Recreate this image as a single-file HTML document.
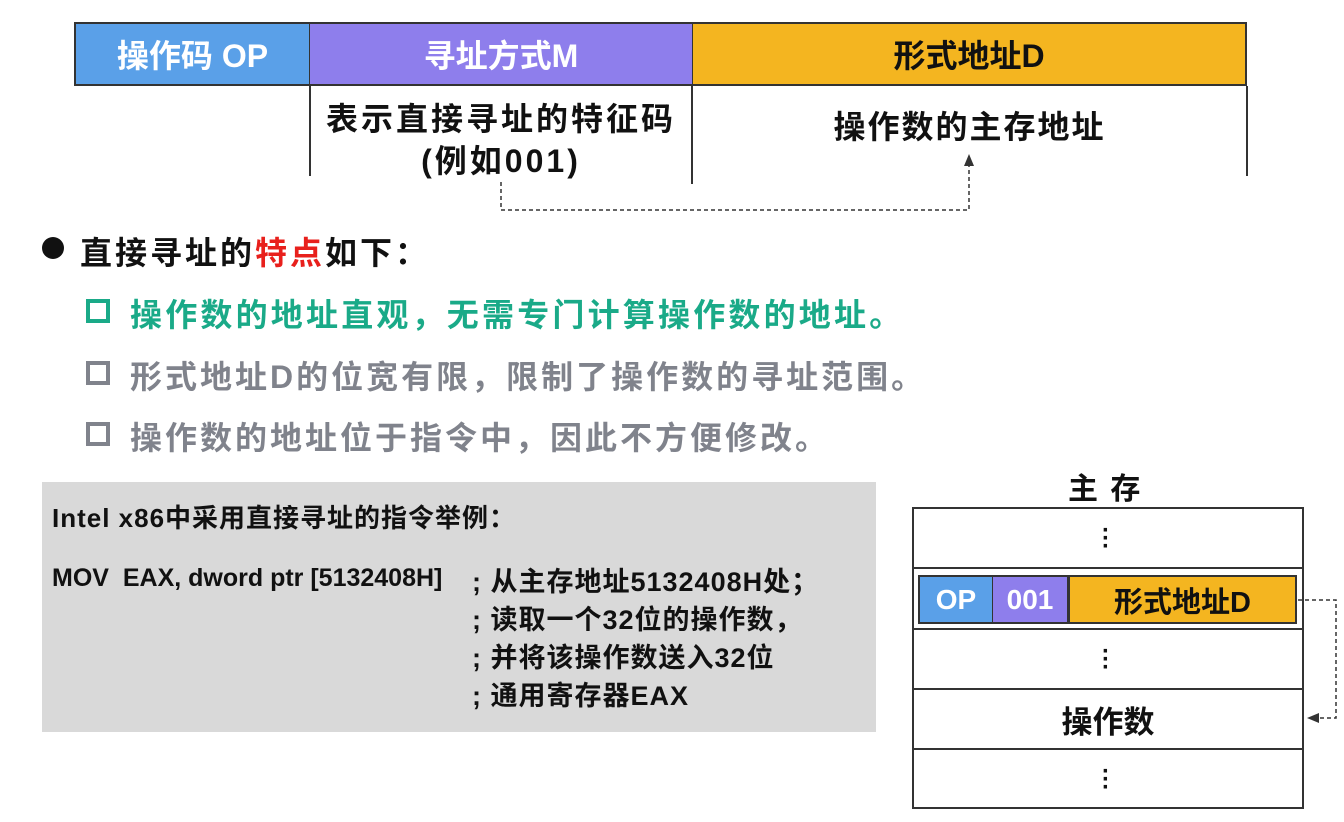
<!DOCTYPE html>
<html><head><meta charset="utf-8"><style>
body{margin:0;width:1344px;height:822px;background:#fff;position:relative;overflow:hidden;font-family:"Liberation Sans","Noto Sans CJK SC",sans-serif;font-weight:bold;}
.a{position:absolute;white-space:nowrap;}
.c{display:flex;align-items:center;justify-content:center;}
</style></head><body>
<div class="a c" style="left:74px;top:22px;width:236px;height:64px;background:#5aa0e8;color:#fff;font-size:32px;box-sizing:border-box;border:2px solid #333;border-right:1px solid #333;">操作码 OP</div>
<div class="a c" style="left:310px;top:22px;width:382px;height:64px;background:#8e7eec;color:#fff;font-size:32px;box-sizing:border-box;border-top:2px solid #333;border-bottom:2px solid #333;">寻址方式M</div>
<div class="a c" style="left:692px;top:22px;width:555px;height:64px;background:#f4b520;color:#111;font-size:32px;box-sizing:border-box;border:2px solid #333;border-left:1px solid #333;">形式地址D</div>
<div class="a" style="left:309px;top:86px;width:2px;height:90px;background:#333"></div>
<div class="a" style="left:691px;top:86px;width:2px;height:98px;background:#333"></div>
<div class="a" style="left:1246px;top:86px;width:2px;height:90px;background:#333"></div>
<div class="a" style="left:310px;top:98px;width:382px;text-align:center;font-size:32px;letter-spacing:3px;color:#111;line-height:42px;">表示直接寻址的特征码<br>(例如001)</div>
<div class="a" style="left:692px;top:102px;width:555px;text-align:center;font-size:32px;letter-spacing:2px;color:#111;">操作数的主存地址</div>
<svg class="a" style="left:0;top:0" width="1344" height="822">
<path d="M501 182 V210 H969 V162" fill="none" stroke="#333" stroke-width="1.5" stroke-dasharray="4 3"/>
<path d="M964 166 L969 154 L974 166 Z" fill="#333"/>
<path d="M1298 600 H1336 V718 H1318" fill="none" stroke="#333" stroke-width="1.5" stroke-dasharray="4 3"/>
<path d="M1307 718 L1319 713 L1319 723 Z" fill="#333"/>
</svg>
<div class="a" style="left:42px;top:237px;width:22px;height:22px;border-radius:50%;background:#111"></div>
<div class="a" style="left:80px;top:228px;font-size:32px;letter-spacing:3px;color:#111;">直接寻址的<span style="color:#e8201c">特点</span>如下：</div>
<div class="a" style="left:86px;top:299px;width:16px;height:16px;border:4px solid #1aaa88"></div>
<div class="a" style="left:130px;top:290px;font-size:32px;letter-spacing:3.2px;color:#1aaa88;">操作数的地址直观，无需专门计算操作数的地址。</div>
<div class="a" style="left:86px;top:361px;width:16px;height:16px;border:4px solid #80838c"></div>
<div class="a" style="left:130px;top:352px;font-size:32px;letter-spacing:3px;color:#80838c;">形式地址D的位宽有限，限制了操作数的寻址范围。</div>
<div class="a" style="left:86px;top:422px;width:16px;height:16px;border:4px solid #80838c"></div>
<div class="a" style="left:130px;top:413px;font-size:32px;letter-spacing:3px;color:#80838c;">操作数的地址位于指令中，因此不方便修改。</div>
<div class="a" style="left:42px;top:482px;width:834px;height:250px;background:#d9d9d9"></div>
<div class="a" style="left:52px;top:498px;font-size:26px;letter-spacing:1px;color:#111;">Intel x86中采用直接寻址的指令举例：</div>
<div class="a" style="left:52px;top:564px;font-size:25px;letter-spacing:0px;color:#111;">MOV&nbsp; EAX, dword ptr [5132408H]</div>
<div class="a" style="left:472px;top:563px;font-size:27px;letter-spacing:1px;color:#111;line-height:38px;">; 从主存地址5132408H处；<br>; 读取一个32位的操作数，<br>; 并将该操作数送入32位<br>; 通用寄存器EAX</div>
<div class="a" style="left:1068px;top:464px;font-size:30px;color:#111;letter-spacing:2px;">主&nbsp;存</div>
<div class="a" style="left:912px;top:507px;width:392px;height:302px;box-sizing:border-box;border:2px solid #333"></div>
<div class="a" style="left:912px;top:567px;width:392px;height:2px;background:#333"></div>
<div class="a" style="left:912px;top:628px;width:392px;height:2px;background:#333"></div>
<div class="a" style="left:912px;top:688px;width:392px;height:2px;background:#333"></div>
<div class="a" style="left:912px;top:748px;width:392px;height:2px;background:#333"></div>
<div class="a c" style="left:918px;top:575px;width:76px;height:49px;background:#5aa0e8;color:#fff;font-size:28px;box-sizing:border-box;border:2px solid #333;">OP</div>
<div class="a c" style="left:993px;top:575px;width:76px;height:49px;background:#8e7eec;color:#fff;font-size:28px;box-sizing:border-box;border:2px solid #333;border-left:none;">001</div>
<div class="a c" style="left:1068px;top:575px;width:229px;height:49px;background:#f4b520;color:#111;font-size:29px;box-sizing:border-box;border:2px solid #333;">形式地址D</div>
<div class="a" style="left:1102px;top:527px;font-size:24px;line-height:8px;color:#111;">·<br>·<br>·</div>
<div class="a" style="left:1102px;top:648px;font-size:24px;line-height:8px;color:#111;">·<br>·<br>·</div>
<div class="a" style="left:1102px;top:768px;font-size:24px;line-height:8px;color:#111;">·<br>·<br>·</div>
<div class="a c" style="left:912px;top:690px;width:392px;height:58px;font-size:31px;color:#111;">操作数</div>
</body></html>
